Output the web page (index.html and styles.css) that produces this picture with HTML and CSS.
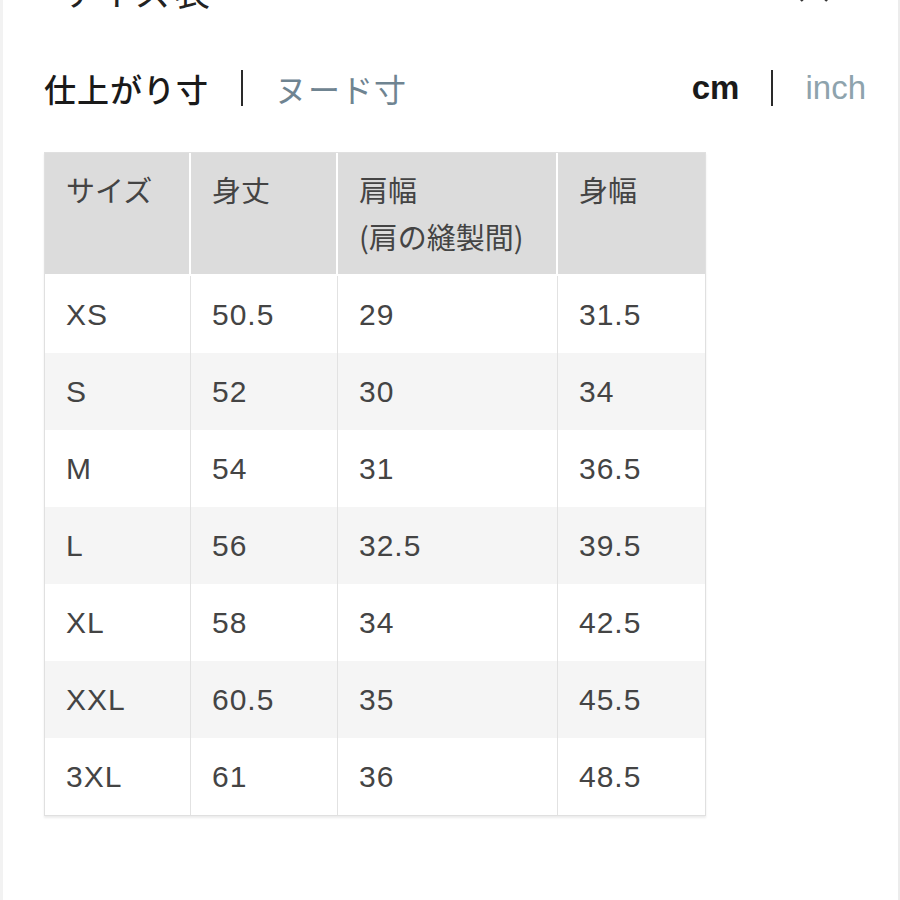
FILE: index.html
```html
<!DOCTYPE html>
<html lang="ja">
<head>
<meta charset="utf-8">
<title>サイズ表</title>
<link rel="stylesheet" href="styles.css">
</head>
<body>
<div class="page">
  <div class="title-row">
    <h1 class="title">サイズ表</h1>
    <svg class="close" width="30" height="30" viewBox="0 0 30 30"><path d="M2 2 L28 28 M28 2 L2 28" stroke="#333" stroke-width="2.4" fill="none"/></svg>
  </div>
  <div class="toggle-row">
    <div class="toggle">
      <span class="opt active jp">仕上がり寸</span>
      <span class="bar"></span>
      <span class="opt inactive jp">ヌード寸</span>
    </div>
    <div class="toggle">
      <span class="opt active unit">cm</span>
      <span class="bar"></span>
      <span class="opt inactive unit light">inch</span>
    </div>
  </div>
  <table class="size-table">
    <colgroup>
      <col class="c1"><col class="c2"><col class="c3"><col class="c4">
    </colgroup>
    <thead>
      <tr>
        <th>サイズ</th>
        <th>身丈</th>
        <th>肩幅<br>(肩の縫製間)</th>
        <th>身幅</th>
      </tr>
    </thead>
    <tbody>
      <tr><td>XS</td><td>50.5</td><td>29</td><td>31.5</td></tr>
      <tr><td>S</td><td>52</td><td>30</td><td>34</td></tr>
      <tr><td>M</td><td>54</td><td>31</td><td>36.5</td></tr>
      <tr><td>L</td><td>56</td><td>32.5</td><td>39.5</td></tr>
      <tr><td>XL</td><td>58</td><td>34</td><td>42.5</td></tr>
      <tr><td>XXL</td><td>60.5</td><td>35</td><td>45.5</td></tr>
      <tr><td>3XL</td><td>61</td><td>36</td><td>48.5</td></tr>
    </tbody>
  </table>
</div>
</body>
</html>
```
FILE: styles.css
```css
html, body {
  margin: 0;
  padding: 0;
  background: #ffffff;
}
body {
  border-left: 3px solid #f2f2f2;
  border-right: 2px solid #ececec;
  min-height: 900px;
  box-sizing: border-box;
  overflow: hidden;
  font-family: "Liberation Sans", "Noto Sans CJK JP", sans-serif;
  color: #333;
}
.page {
  padding: 0 32px 0 41px;
}
.title-row {
  display: flex;
  justify-content: space-between;
  align-items: flex-start;
  margin-top: -30px;
  height: 40px;
}
.title {
  margin: 0 0 0 14px;
  font-family: "Noto Sans CJK JP", sans-serif;
  font-weight: 400;
  font-size: 36px;
  line-height: 40px;
  letter-spacing: 3px;
  color: #222;
}
.close {
  margin: 0 37px 0 0;
  transform: translateY(3px);
}
.toggle-row {
  display: flex;
  justify-content: space-between;
  align-items: center;
  margin-top: 58px;
  height: 40px;
}
.toggle {
  display: flex;
  align-items: center;
}
.opt {
  line-height: 40px;
}
.jp {
  font-family: "Noto Sans CJK JP", sans-serif;
  font-size: 32px;
  letter-spacing: 1px;
}
.unit {
  font-family: "Liberation Sans", sans-serif;
  font-size: 33px;
}
.active {
  color: #1a1a1a;
}
.jp.active {
  font-weight: 500;
}
.unit.active {
  font-weight: 700;
}
.inactive {
  color: #6f8491;
}
.inactive.light {
  color: #8ea3ad;
}
.bar {
  display: block;
  width: 2px;
  height: 36px;
  background: #2a2a2a;
  margin: 0 32px;
}
.size-table {
  margin-top: 44px;
  width: 662px;
  border-collapse: separate;
  border-spacing: 0;
  border: 1px solid #e0e0e0;
  box-shadow: 0 2px 2px rgba(0, 0, 0, 0.08);
  table-layout: fixed;
}
.c1 { width: 146px; }
.c2 { width: 147px; }
.c3 { width: 220px; }
.c4 { width: 147px; }
.size-table th {
  background: #dcdcdc;
  height: 123px;
  box-sizing: border-box;
  padding: 13px 10px 0 21px;
  vertical-align: top;
  text-align: left;
  font-family: "Noto Sans CJK JP", sans-serif;
  font-weight: 400;
  font-size: 29px;
  line-height: 47px;
  color: #444;
  border-right: 2px solid #ffffff;
  border-bottom: 2px solid #ffffff;
}
.size-table th:last-child {
  border-right: 0;
}
.size-table td {
  height: 77px;
  box-sizing: border-box;
  padding: 0 10px 0 21px;
  vertical-align: middle;
  text-align: left;
  font-family: "Liberation Sans", sans-serif;
  font-size: 30px;
  letter-spacing: 1px;
  color: #444;
  border-right: 1px solid #e2e2e2;
}
.size-table td:last-child {
  border-right: 0;
}
.size-table tbody tr:nth-child(even) td {
  background: #f5f5f5;
}
```
